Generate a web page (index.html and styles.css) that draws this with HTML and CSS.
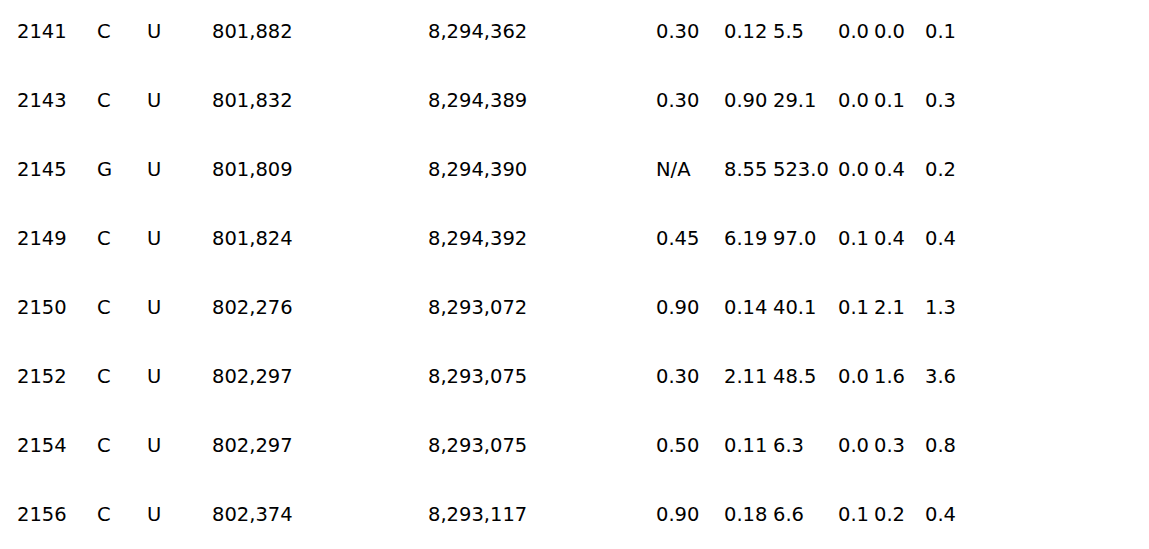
FILE: index.html
```html
<!DOCTYPE html>
<html>
<head>
<meta charset="utf-8">
<link rel="stylesheet" href="styles.css">
</head>
<body>
<table class="data">
<colgroup>
<col class="c1"><col class="c2"><col class="c3"><col class="c4"><col class="c5"><col class="c6"><col class="c7"><col class="c8"><col class="c9"><col class="c10"><col class="c11">
</colgroup>
<tbody>
<tr><td>2141</td><td>C</td><td>U</td><td>801,882</td><td>8,294,362</td><td>0.30</td><td>0.12</td><td>5.5</td><td>0.0</td><td>0.0</td><td>0.1</td></tr>
<tr><td>2143</td><td>C</td><td>U</td><td>801,832</td><td>8,294,389</td><td>0.30</td><td>0.90</td><td>29.1</td><td>0.0</td><td>0.1</td><td>0.3</td></tr>
<tr><td>2145</td><td>G</td><td>U</td><td>801,809</td><td>8,294,390</td><td>N/A</td><td>8.55</td><td>523.0</td><td>0.0</td><td>0.4</td><td>0.2</td></tr>
<tr><td>2149</td><td>C</td><td>U</td><td>801,824</td><td>8,294,392</td><td>0.45</td><td>6.19</td><td>97.0</td><td>0.1</td><td>0.4</td><td>0.4</td></tr>
<tr><td>2150</td><td>C</td><td>U</td><td>802,276</td><td>8,293,072</td><td>0.90</td><td>0.14</td><td>40.1</td><td>0.1</td><td>2.1</td><td>1.3</td></tr>
<tr><td>2152</td><td>C</td><td>U</td><td>802,297</td><td>8,293,075</td><td>0.30</td><td>2.11</td><td>48.5</td><td>0.0</td><td>1.6</td><td>3.6</td></tr>
<tr><td>2154</td><td>C</td><td>U</td><td>802,297</td><td>8,293,075</td><td>0.50</td><td>0.11</td><td>6.3</td><td>0.0</td><td>0.3</td><td>0.8</td></tr>
<tr><td>2156</td><td>C</td><td>U</td><td>802,374</td><td>8,293,117</td><td>0.90</td><td>0.18</td><td>6.6</td><td>0.1</td><td>0.2</td><td>0.4</td></tr>
</tbody>
</table>
</body>
</html>
```
FILE: styles.css
```css
html, body {
  margin: 0;
  padding: 0;
  background: #fff;
}
body {
  padding: 21px 0 0 17px;
  font-family: "DejaVu Sans", Verdana, sans-serif;
  font-size: 19.5px;
  color: #000;
}
.data {
  border-collapse: collapse;
  table-layout: fixed;
  width: 984px;
}
.data td {
  padding: 0;
  height: 69px;
  line-height: 22px;
  vertical-align: top;
  white-space: nowrap;
}
.c1 { width: 80px; }
.c2 { width: 50px; }
.c3 { width: 65px; }
.c4 { width: 216px; }
.c5 { width: 228px; }
.c6 { width: 68px; }
.c7 { width: 49px; }
.c8 { width: 65px; }
.c9 { width: 36px; }
.c10 { width: 51px; }
.c11 { width: 76px; }
```
